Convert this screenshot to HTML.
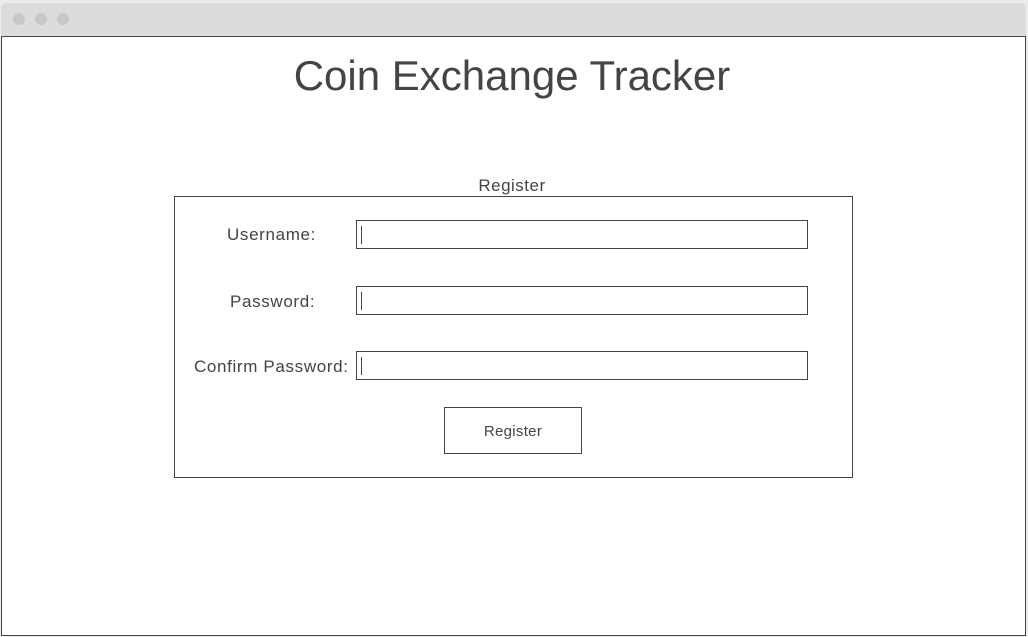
<!DOCTYPE html>
<html><head><style>
body{margin:0;width:1028px;height:637px;background:#ececec;position:relative;overflow:hidden;font-family:"Liberation Sans",sans-serif;color:#444}
.chrome{position:absolute;left:1px;top:3px;width:1025px;height:34px;background:#dcdcdc;border-radius:5px 5px 0 0}
.dot{position:absolute;top:10px;width:12px;height:12px;border-radius:50%;background:#c8c8c8}
.page{position:absolute;left:1px;top:36px;width:1023px;height:598px;border:1px solid #444;background:#fff}
.a{position:absolute}
.box{position:absolute;border:1px solid #444;box-sizing:border-box}
.lbl{position:absolute;font-size:17px;color:#444;letter-spacing:0.65px}
.inp{position:absolute;left:356px;width:452px;height:29px;border:1px solid #444;box-sizing:border-box}
.inp:after{content:"";position:absolute;left:4px;top:5px;width:1px;height:18px;background:#444}
</style></head><body>
<div class="chrome"><div class="dot" style="left:12px"></div><div class="dot" style="left:34px"></div><div class="dot" style="left:56px"></div></div>
<div class="page"></div>
<div class="a" style="left:0;width:1024px;top:52px;text-align:center;font-size:42px">Coin Exchange Tracker</div>
<div class="a" style="left:0;width:1024px;top:176px;text-align:center;font-size:17px;letter-spacing:0.5px">Register</div>
<div class="box" style="left:174px;top:196px;width:679px;height:282px"></div>
<div class="lbl" style="left:227px;top:225px">Username:</div>
<div class="lbl" style="left:230px;top:292px">Password:</div>
<div class="lbl" style="left:194px;top:357px">Confirm Password:</div>
<div class="inp" style="top:220px"></div>
<div class="inp" style="top:286px"></div>
<div class="inp" style="top:351px"></div>
<div class="box" style="left:444px;top:407px;width:138px;height:47px;text-align:center;line-height:47px;font-size:15px;letter-spacing:0.3px">Register</div>
</body></html>
